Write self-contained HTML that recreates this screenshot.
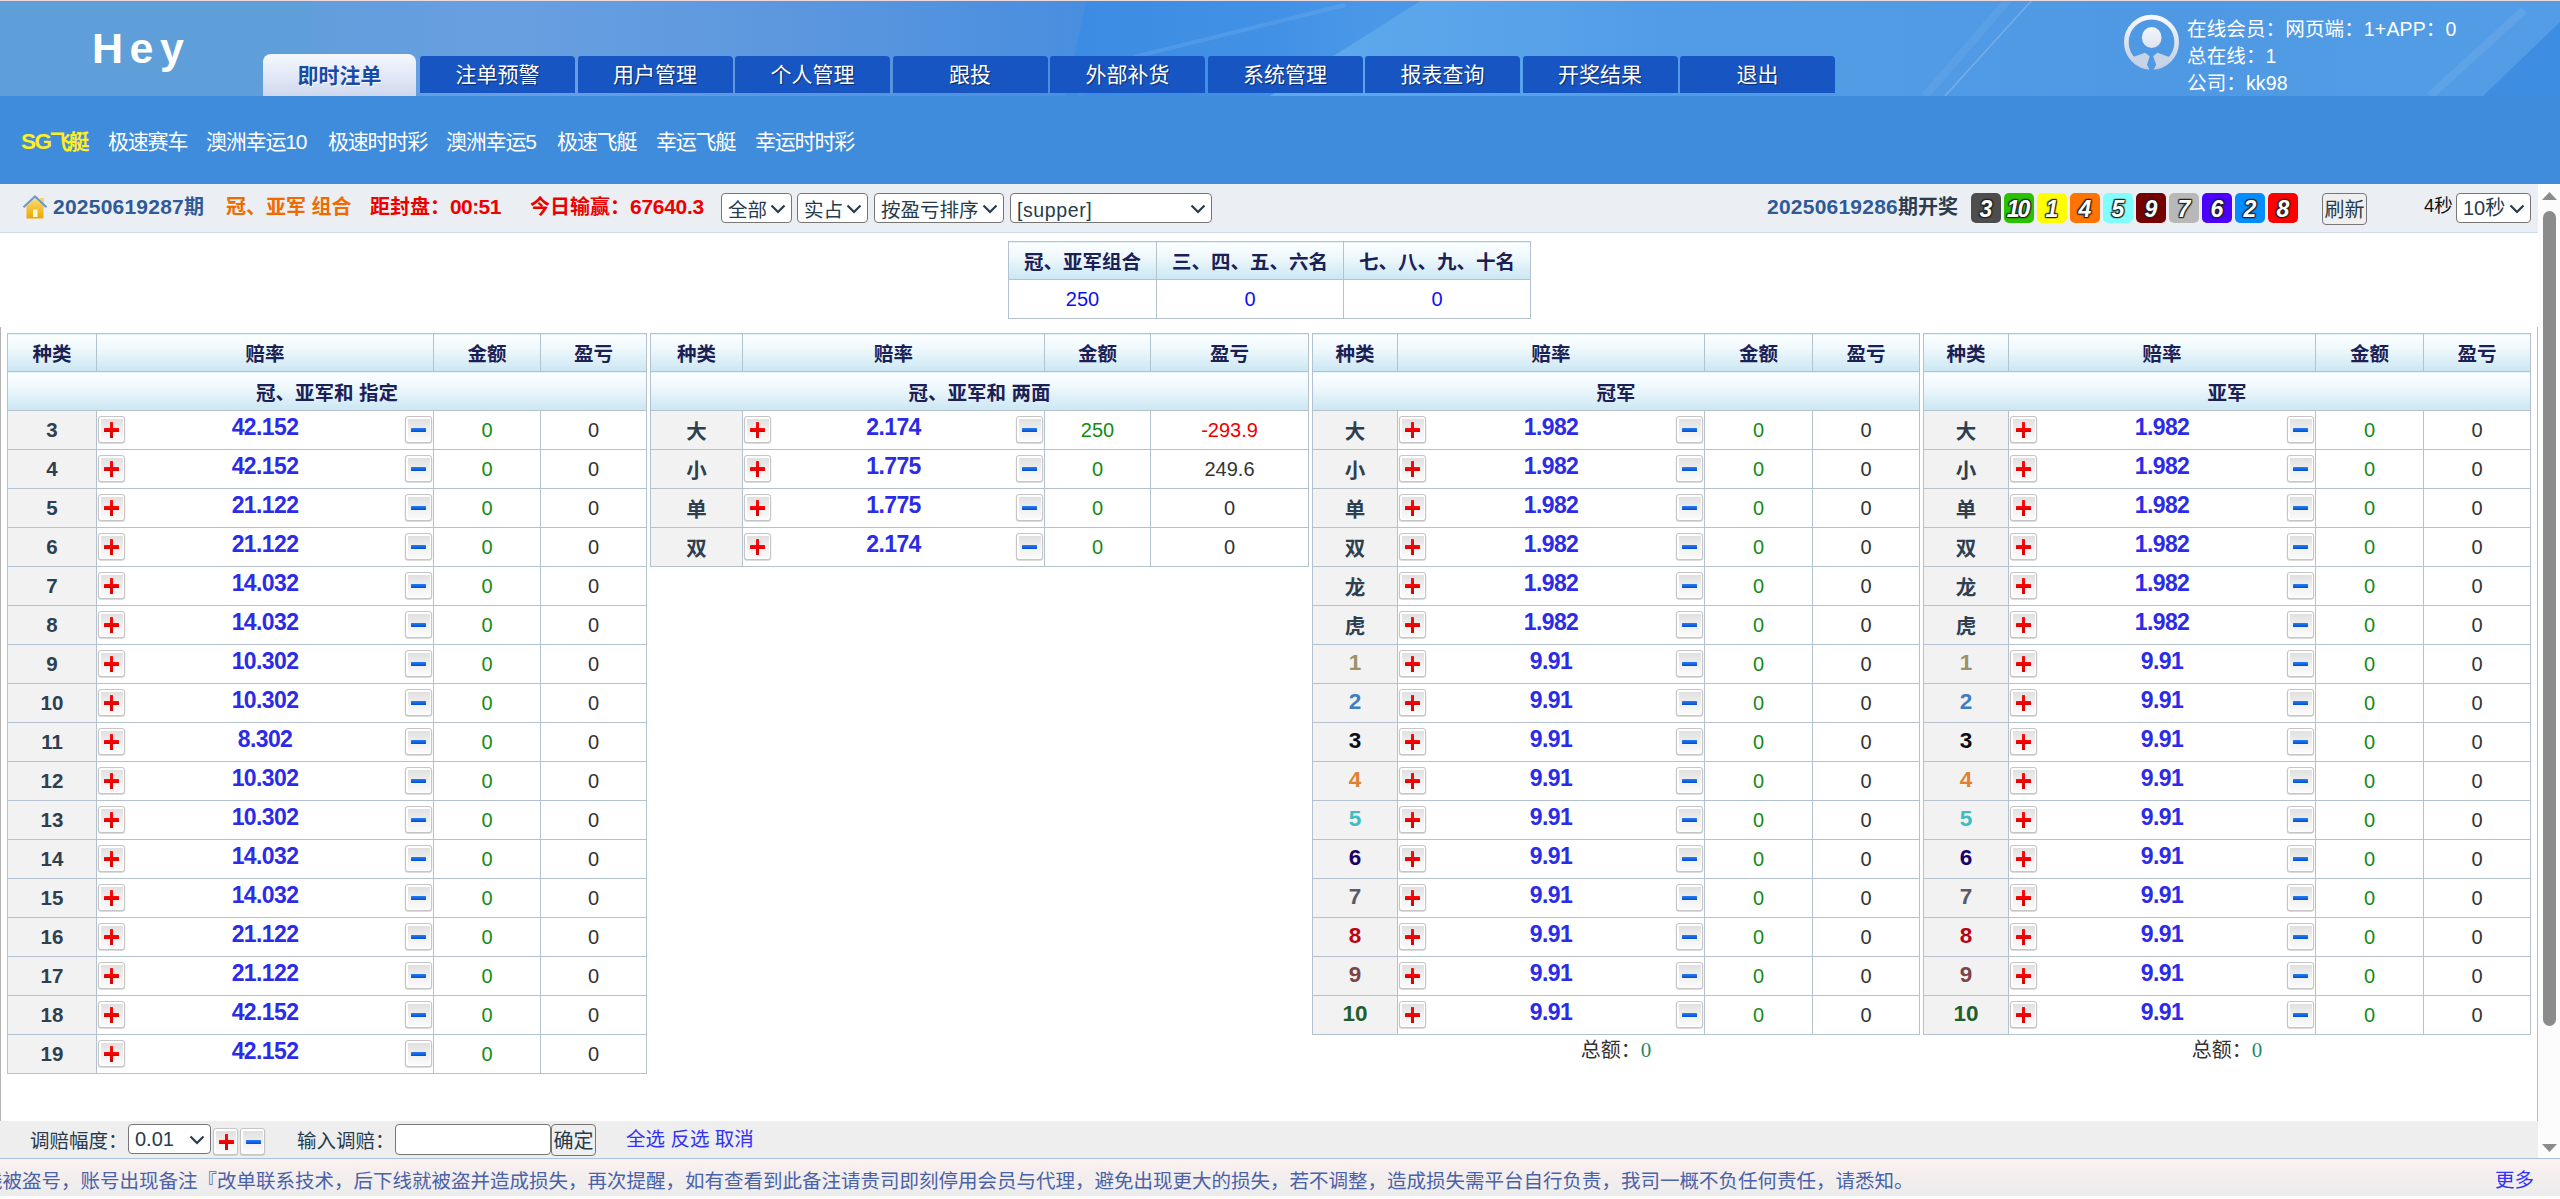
<!DOCTYPE html><html lang="zh-CN"><head><meta charset="utf-8"><title>Hey</title><style>
*{box-sizing:border-box}
html,body{margin:0;padding:0}
body{width:2560px;height:1199px;overflow:hidden;position:relative;background:#fff;
 font-family:"Liberation Sans","Noto Sans CJK SC",sans-serif;font-size:19.5px;color:#333}
.abs{position:absolute}
#hdr{position:absolute;left:0;top:0;width:2560px;height:96px;overflow:hidden;background:#5f9fd9}
#hdr .topline{position:absolute;left:0;top:0;width:2560px;height:1px;background:#ecd9dc;z-index:5}
#logo{position:absolute;left:92px;top:22px;font-size:43px;font-weight:bold;color:#fff;letter-spacing:6.5px;line-height:52px;white-space:nowrap}
.tab{position:absolute;top:56px;height:37px;width:155px;background:#1756c2;color:#fff;font-size:21px;line-height:38px;text-align:center;
 border-radius:3px 4px 0 0;text-shadow:1px 1px 1px rgba(0,0,40,.55);white-space:nowrap}
.tab.on{top:54px;height:42px;width:153px;line-height:44px;background:linear-gradient(180deg,#f4f7fd 0,#e3e9f7 50%,#cfd8ee 100%);color:#1a4aa8;font-weight:bold;
 border-radius:8px 8px 0 0;text-shadow:1px 1px 0 #fff}
#user{position:absolute;left:2187px;top:16px;color:#fff;font-size:19.5px;letter-spacing:.15px;line-height:27px;white-space:nowrap}
#nav{position:absolute;left:0;top:96px;width:2560px;height:88px;background:#3f8bdc}
#nav span{position:absolute;top:28px;line-height:36px;font-size:21px;color:#fff;white-space:nowrap;letter-spacing:-1.2px}
#nav span.on{color:#ffee22;font-weight:bold;letter-spacing:-2.3px}
#nav span.on b{font-size:22.5px;letter-spacing:-1.4px;margin-right:-1px}
#tool{position:absolute;left:0;top:184px;width:2538px;height:49px;background:#ebeff3;border-bottom:1px solid #cfdcf0}
#tool .t .d{font-size:21px;line-height:20px}
#tool .t{position:absolute;top:8px;line-height:30px;font-size:20px;font-weight:bold;white-space:nowrap}
.sel{position:absolute;height:30px;border:1px solid #767676;border-radius:4px;background:#fff;color:#263c4c;font-size:19.5px;line-height:28px;padding:2px 0 0 6px;white-space:nowrap;overflow:hidden}
.sel svg{position:absolute;right:5px;top:10px}
.ball{position:absolute;top:9px;width:30px;height:30px;border-radius:5px;font-family:"Liberation Sans",sans-serif;font-size:23px;font-weight:bold;font-style:italic;color:#fff;text-align:center;line-height:32px;text-shadow:1px 1px 1px #222,-1px -1px 1px #222,1px -1px 1px #222,-1px 1px 1px #222,0 0 2px #000}
.ball svg{position:absolute;left:0;top:0}
.btn{position:absolute;border:1px solid #767676;border-radius:4px;background:#efefef;color:#263c4c;font-size:20px;text-align:center;white-space:nowrap}
table.g{position:absolute;border-collapse:collapse;table-layout:fixed;font-size:20px}
table.g td,table.g th{border:1px solid #b4c1cf;padding:0;text-align:center;height:39px;overflow:hidden;white-space:nowrap;position:relative}
table.g th{background:linear-gradient(180deg,#fcfeff 0,#eef8fc 40%,#cbe6f3 100%);color:#1b2055;font-weight:bold;height:39px;font-size:19.5px}
table.g tr.h th{height:38px}
table.g td.k{background:#f2f2f2;font-weight:bold;color:#2e4050;font-size:20.5px}
table.g td.o{color:#2b2be8;font-weight:bold;font-size:23px;letter-spacing:-.6px}
table.g td.o b{position:relative;top:-3px}
table.g td.m{color:#148c14}
table.g td.p{color:#333}
table.g td.n{font-family:"Liberation Sans",sans-serif;font-size:22.5px;padding-bottom:3px}
.pb,.mb{position:absolute;top:5px;width:27px;height:27px;border:1px solid #c6c4c4;border-radius:3px;background:#fff;box-shadow:0 .6px 0 .2px rgba(170,168,168,.55)}
.pb{left:1px}.mb{right:1px}
.pb i,.mb i{position:absolute;left:1.5px;top:1.5px;right:1.5px;bottom:1.5px;background:linear-gradient(180deg,#e0e0e0 0,#efefef 50%,#fbfbfb 100%)}
.pb:before,.pb:after,.mb:before{content:"";position:absolute;z-index:2;border-radius:.5px}
.pb:before{left:5px;top:11.4px;width:15.25px;height:3.2px;background:linear-gradient(180deg,#ff0a0a,#d80000)}
.pb:after{left:11px;top:5.25px;width:3.2px;height:15.5px;background:linear-gradient(180deg,#ff0a0a,#dc0000)}
.mb:before{left:4.75px;top:11.4px;width:15px;height:3.2px;background:linear-gradient(180deg,#2a7cf4,#0050d2)}
</style></head><body>
<div id="hdr"><div class="topline"></div>
<svg class="abs" style="left:0;top:0" width="2560" height="96" viewBox="0 0 2560 96"><defs><linearGradient id="hb" x1="0" y1="0" x2="2560" y2="0" gradientUnits="userSpaceOnUse"><stop offset="0" stop-color="#5f9fd9"/><stop offset=".121" stop-color="#5f9fd9"/><stop offset=".126" stop-color="#639ddc"/><stop offset=".2" stop-color="#689fe1"/><stop offset=".31" stop-color="#5c97de"/><stop offset=".41" stop-color="#4b8fdf"/><stop offset=".4245" stop-color="#488ee0"/><stop offset=".4246" stop-color="#3c8ce3"/><stop offset=".5" stop-color="#4191e6"/><stop offset=".53" stop-color="#4a97e8"/><stop offset=".7" stop-color="#529ce6"/><stop offset=".85" stop-color="#4f99e4"/><stop offset="1" stop-color="#549de6"/></linearGradient><linearGradient id="hl" x1="1300" y1="0" x2="1800" y2="0" gradientUnits="userSpaceOnUse"><stop offset="0" stop-color="#60aaee" stop-opacity=".95"/><stop offset=".5" stop-color="#5ca5ea" stop-opacity=".7"/><stop offset="1" stop-color="#4f9ae6" stop-opacity="0"/></linearGradient></defs><rect width="2560" height="96" fill="url(#hb)"/><polygon points="1087,0 1100,0 1078,96 1065,96" fill="#3c8ce3"/><polygon points="1422,0 1900,0 1900,96 1270,96" fill="url(#hl)"/><path d="M1134 57 L1345 5" stroke="#fff" stroke-opacity=".09" stroke-width="4" fill="none"/><path d="M1945 96 L2032 0" stroke="#fff" stroke-opacity=".2" stroke-width="1.5" fill="none"/><path d="M1925 96 L2008 0" stroke="#fff" stroke-opacity=".05" stroke-width="8" fill="none"/><polygon points="2483,96 2560,22 2560,96" fill="#3a8ce0" opacity=".85"/><path d="M2430 96 L2524 10" stroke="#fff" stroke-opacity=".07" stroke-width="8" fill="none"/></svg>
<div id="logo">Hey</div>
<div class="tab on" style="left:263px">即时注单</div>
<div class="tab" style="left:420.0px">注单预警</div>
<div class="tab" style="left:577.5px">用户管理</div>
<div class="tab" style="left:735.0px">个人管理</div>
<div class="tab" style="left:892.5px">跟投</div>
<div class="tab" style="left:1050.0px">外部补货</div>
<div class="tab" style="left:1207.5px">系统管理</div>
<div class="tab" style="left:1365.0px">报表查询</div>
<div class="tab" style="left:1522.5px">开奖结果</div>
<div class="tab" style="left:1680.0px">退出</div>
<svg class="abs" style="left:2122px;top:13px" width="60" height="60" viewBox="0 0 60 60"><defs><linearGradient id="av" x1="0" y1="0" x2="0" y2="1"><stop offset="0" stop-color="#f6f8fc"/><stop offset="1" stop-color="#c3cee3"/></linearGradient><linearGradient id="av2" x1="0" y1="0" x2="0" y2="1"><stop offset="0" stop-color="#f4f6fb"/><stop offset="1" stop-color="#dde3f1"/></linearGradient><clipPath id="avc"><circle cx="29.5" cy="29.2" r="25.2"/></clipPath><mask id="avm"><rect width="60" height="60" fill="#fff"/><path d="M25.4 50 L24.9 52 L27.1 55.75 L28.3 60 L30.9 60 L32.1 55.75 L34.25 52 L33.7 50 Z" fill="#000"/></mask></defs><circle cx="29.5" cy="29.2" r="25.15" fill="none" stroke="url(#av)" stroke-width="4.7" mask="url(#avm)"/><ellipse cx="29.7" cy="24.5" rx="9.85" ry="10.5" fill="url(#av2)"/><g clip-path="url(#avc)" fill="#c9d3e6"><path d="M4 48 L11.1 43.9 L23 39.8 L27.7 43.25 L24.9 52 L27.1 55.75 L27.1 60 L4 60 Z"/><path d="M55 48 L47.4 43.9 L35.5 39.8 L31.1 43.25 L34.25 52 L32.1 55.75 L32.1 60 L55 60 Z"/></g></svg>
<div id="user">在线会员：网页端：1+APP：0<br>总在线：1<br>公司：kk98</div>
</div>
<div id="nav">
<span style="left:21px" class=on><b>SG</b>飞艇</span>
<span style="left:108px">极速赛车</span>
<span style="left:206px">澳洲幸运10</span>
<span style="left:328px">极速时时彩</span>
<span style="left:446px">澳洲幸运5</span>
<span style="left:557px">极速飞艇</span>
<span style="left:656px">幸运飞艇</span>
<span style="left:755px">幸运时时彩</span>
</div>
<div id="tool">
<svg class="abs" style="left:22px;top:10px" width="26" height="26" viewBox="0 0 26 26"><defs><linearGradient id="hs" x1="0" y1="0" x2="0" y2="1"><stop offset="0" stop-color="#ffd970"/><stop offset="1" stop-color="#e9a800"/></linearGradient></defs><rect x="18" y="4" width="4" height="8" fill="#ffd45a"/><path d="M4.5 12 L13 4.5 L21.5 12 L21.5 24.5 L4.5 24.5 Z" fill="url(#hs)"/><rect x="11" y="15.5" width="4.5" height="7.5" fill="#fff6d8"/><path d="M1.5 13.2 L13 2.5 L24.5 13.2" fill="none" stroke="#6a9ac8" stroke-width="2.2" stroke-linejoin="miter"/></svg>
<span class="t" style="left:53px;color:#2f5a96"><span class="d" style="letter-spacing:.23px">20250619287</span>期</span>
<span class="t" style="left:226px;color:#f06a00">冠、亚军 组合</span>
<span class="t" style="left:370px;color:#ee0000">距封盘：<span class="d" style="letter-spacing:-.6px">00:51</span></span>
<span class="t" style="left:530px;color:#ee0000">今日输赢：<span class="d" style="letter-spacing:-.3px">67640.3</span></span>
<div class="sel" style="left:721px;top:9px;width:71px">全部<svg width="16" height="10" viewBox="0 0 16 10"><path d="M1.5 1.5 L8 8 L14.5 1.5" fill="none" stroke="#263c4c" stroke-width="2.2"/></svg></div>
<div class="sel" style="left:797px;top:9px;width:71px">实占<svg width="16" height="10" viewBox="0 0 16 10"><path d="M1.5 1.5 L8 8 L14.5 1.5" fill="none" stroke="#263c4c" stroke-width="2.2"/></svg></div>
<div class="sel" style="left:874px;top:9px;width:130px">按盈亏排序<svg width="16" height="10" viewBox="0 0 16 10"><path d="M1.5 1.5 L8 8 L14.5 1.5" fill="none" stroke="#263c4c" stroke-width="2.2"/></svg></div>
<div class="sel" style="left:1010px;top:9px;width:202px;letter-spacing:.6px">[supper]<svg width="16" height="10" viewBox="0 0 16 10"><path d="M1.5 1.5 L8 8 L14.5 1.5" fill="none" stroke="#263c4c" stroke-width="2.2"/></svg></div>
<span class="t" style="left:1767px;color:#2f5a96"><span class="d" style="letter-spacing:.23px">20250619286</span><span style="color:#2e3d4e">期开奖</span></span>
<div class="ball" style="left:1971px;background:#4d4d4d">3</div>
<div class="ball" style="left:2004px;background:#28c200;letter-spacing:-2px;text-indent:-3px">10</div>
<div class="ball" style="left:2037px;background:#ffff00">1</div>
<div class="ball" style="left:2070px;background:#ff7300">4</div>
<div class="ball" style="left:2103px;background:#81ffff">5</div>
<div class="ball" style="left:2136px;background:#760000">9</div>
<div class="ball" style="left:2169px;background:#b8b8b8">7</div>
<div class="ball" style="left:2202px;background:#4b00fe">6</div>
<div class="ball" style="left:2235px;background:#018dff">2</div>
<div class="ball" style="left:2268px;background:#fe0000">8</div>
<div class="btn" style="left:2322px;top:9px;width:45px;height:32px;line-height:33px;padding:0">刷新</div>
<span class="abs" style="left:2424px;top:7px;line-height:30px;font-size:18.5px;color:#111;white-space:nowrap">4秒</span>
<div class="sel" style="left:2456px;top:9px;width:75px;padding-top:0;font-size:20px">10秒<svg width="16" height="10" viewBox="0 0 16 10"><path d="M1.5 1.5 L8 8 L14.5 1.5" fill="none" stroke="#263c4c" stroke-width="2.2"/></svg></div>
</div>
<table class="g" style="left:1008px;top:241px;width:523px"><colgroup><col style="width:148px"><col style="width:187px"><col style="width:187px"></colgroup><tr class="h"><th>冠、亚军组合</th><th>三、四、五、六名</th><th>七、八、九、十名</th></tr><tr><td style="color:#1010ee">250</td><td style="color:#1010ee">0</td><td style="color:#1010ee">0</td></tr></table>
<table class="g" style="left:7px;top:333px;width:640px"><colgroup><col style="width:89px"><col style="width:337px"><col style="width:107px"><col style="width:106px"></colgroup><tr class="h"><th>种类</th><th>赔率</th><th>金额</th><th>盈亏</th></tr><tr><th colspan="4">冠、亚军和 指定</th></tr><tr><td class="k">3</td><td class="o"><span class="pb"><i></i></span><b>42.152</b><span class="mb"><i></i></span></td><td class="m">0</td><td class="p">0</td></tr><tr><td class="k">4</td><td class="o"><span class="pb"><i></i></span><b>42.152</b><span class="mb"><i></i></span></td><td class="m">0</td><td class="p">0</td></tr><tr><td class="k">5</td><td class="o"><span class="pb"><i></i></span><b>21.122</b><span class="mb"><i></i></span></td><td class="m">0</td><td class="p">0</td></tr><tr><td class="k">6</td><td class="o"><span class="pb"><i></i></span><b>21.122</b><span class="mb"><i></i></span></td><td class="m">0</td><td class="p">0</td></tr><tr><td class="k">7</td><td class="o"><span class="pb"><i></i></span><b>14.032</b><span class="mb"><i></i></span></td><td class="m">0</td><td class="p">0</td></tr><tr><td class="k">8</td><td class="o"><span class="pb"><i></i></span><b>14.032</b><span class="mb"><i></i></span></td><td class="m">0</td><td class="p">0</td></tr><tr><td class="k">9</td><td class="o"><span class="pb"><i></i></span><b>10.302</b><span class="mb"><i></i></span></td><td class="m">0</td><td class="p">0</td></tr><tr><td class="k">10</td><td class="o"><span class="pb"><i></i></span><b>10.302</b><span class="mb"><i></i></span></td><td class="m">0</td><td class="p">0</td></tr><tr><td class="k">11</td><td class="o"><span class="pb"><i></i></span><b>8.302</b><span class="mb"><i></i></span></td><td class="m">0</td><td class="p">0</td></tr><tr><td class="k">12</td><td class="o"><span class="pb"><i></i></span><b>10.302</b><span class="mb"><i></i></span></td><td class="m">0</td><td class="p">0</td></tr><tr><td class="k">13</td><td class="o"><span class="pb"><i></i></span><b>10.302</b><span class="mb"><i></i></span></td><td class="m">0</td><td class="p">0</td></tr><tr><td class="k">14</td><td class="o"><span class="pb"><i></i></span><b>14.032</b><span class="mb"><i></i></span></td><td class="m">0</td><td class="p">0</td></tr><tr><td class="k">15</td><td class="o"><span class="pb"><i></i></span><b>14.032</b><span class="mb"><i></i></span></td><td class="m">0</td><td class="p">0</td></tr><tr><td class="k">16</td><td class="o"><span class="pb"><i></i></span><b>21.122</b><span class="mb"><i></i></span></td><td class="m">0</td><td class="p">0</td></tr><tr><td class="k">17</td><td class="o"><span class="pb"><i></i></span><b>21.122</b><span class="mb"><i></i></span></td><td class="m">0</td><td class="p">0</td></tr><tr><td class="k">18</td><td class="o"><span class="pb"><i></i></span><b>42.152</b><span class="mb"><i></i></span></td><td class="m">0</td><td class="p">0</td></tr><tr><td class="k">19</td><td class="o"><span class="pb"><i></i></span><b>42.152</b><span class="mb"><i></i></span></td><td class="m">0</td><td class="p">0</td></tr></table>
<table class="g" style="left:650px;top:333px;width:659px"><colgroup><col style="width:92px"><col style="width:302px"><col style="width:106px"><col style="width:158px"></colgroup><tr class="h"><th>种类</th><th>赔率</th><th>金额</th><th>盈亏</th></tr><tr><th colspan="4">冠、亚军和 两面</th></tr><tr><td class="k">大</td><td class="o"><span class="pb"><i></i></span><b>2.174</b><span class="mb"><i></i></span></td><td class="m">250</td><td class="p" style="color:#ee0000">-293.9</td></tr><tr><td class="k">小</td><td class="o"><span class="pb"><i></i></span><b>1.775</b><span class="mb"><i></i></span></td><td class="m">0</td><td class="p">249.6</td></tr><tr><td class="k">单</td><td class="o"><span class="pb"><i></i></span><b>1.775</b><span class="mb"><i></i></span></td><td class="m">0</td><td class="p">0</td></tr><tr><td class="k">双</td><td class="o"><span class="pb"><i></i></span><b>2.174</b><span class="mb"><i></i></span></td><td class="m">0</td><td class="p">0</td></tr></table>
<table class="g" style="left:1312px;top:333px;width:608px"><colgroup><col style="width:85px"><col style="width:307px"><col style="width:108px"><col style="width:107px"></colgroup><tr class="h"><th>种类</th><th>赔率</th><th>金额</th><th>盈亏</th></tr><tr><th colspan="4">冠军</th></tr><tr><td class="k">大</td><td class="o"><span class="pb"><i></i></span><b>1.982</b><span class="mb"><i></i></span></td><td class="m">0</td><td class="p">0</td></tr><tr><td class="k">小</td><td class="o"><span class="pb"><i></i></span><b>1.982</b><span class="mb"><i></i></span></td><td class="m">0</td><td class="p">0</td></tr><tr><td class="k">单</td><td class="o"><span class="pb"><i></i></span><b>1.982</b><span class="mb"><i></i></span></td><td class="m">0</td><td class="p">0</td></tr><tr><td class="k">双</td><td class="o"><span class="pb"><i></i></span><b>1.982</b><span class="mb"><i></i></span></td><td class="m">0</td><td class="p">0</td></tr><tr><td class="k">龙</td><td class="o"><span class="pb"><i></i></span><b>1.982</b><span class="mb"><i></i></span></td><td class="m">0</td><td class="p">0</td></tr><tr><td class="k">虎</td><td class="o"><span class="pb"><i></i></span><b>1.982</b><span class="mb"><i></i></span></td><td class="m">0</td><td class="p">0</td></tr><tr><td class="k n" style="color:#9a9268">1</td><td class="o"><span class="pb"><i></i></span><b>9.91</b><span class="mb"><i></i></span></td><td class="m">0</td><td class="p">0</td></tr><tr><td class="k n" style="color:#3d7fc0">2</td><td class="o"><span class="pb"><i></i></span><b>9.91</b><span class="mb"><i></i></span></td><td class="m">0</td><td class="p">0</td></tr><tr><td class="k n" style="color:#0a0a14">3</td><td class="o"><span class="pb"><i></i></span><b>9.91</b><span class="mb"><i></i></span></td><td class="m">0</td><td class="p">0</td></tr><tr><td class="k n" style="color:#e08030">4</td><td class="o"><span class="pb"><i></i></span><b>9.91</b><span class="mb"><i></i></span></td><td class="m">0</td><td class="p">0</td></tr><tr><td class="k n" style="color:#40bcc0">5</td><td class="o"><span class="pb"><i></i></span><b>9.91</b><span class="mb"><i></i></span></td><td class="m">0</td><td class="p">0</td></tr><tr><td class="k n" style="color:#1a0066">6</td><td class="o"><span class="pb"><i></i></span><b>9.91</b><span class="mb"><i></i></span></td><td class="m">0</td><td class="p">0</td></tr><tr><td class="k n" style="color:#5a5a66">7</td><td class="o"><span class="pb"><i></i></span><b>9.91</b><span class="mb"><i></i></span></td><td class="m">0</td><td class="p">0</td></tr><tr><td class="k n" style="color:#bb0010">8</td><td class="o"><span class="pb"><i></i></span><b>9.91</b><span class="mb"><i></i></span></td><td class="m">0</td><td class="p">0</td></tr><tr><td class="k n" style="color:#7a4448">9</td><td class="o"><span class="pb"><i></i></span><b>9.91</b><span class="mb"><i></i></span></td><td class="m">0</td><td class="p">0</td></tr><tr><td class="k n" style="color:#1f5f2f">10</td><td class="o"><span class="pb"><i></i></span><b>9.91</b><span class="mb"><i></i></span></td><td class="m">0</td><td class="p">0</td></tr></table>
<table class="g" style="left:1923px;top:333px;width:608px"><colgroup><col style="width:85px"><col style="width:307px"><col style="width:108px"><col style="width:107px"></colgroup><tr class="h"><th>种类</th><th>赔率</th><th>金额</th><th>盈亏</th></tr><tr><th colspan="4">亚军</th></tr><tr><td class="k">大</td><td class="o"><span class="pb"><i></i></span><b>1.982</b><span class="mb"><i></i></span></td><td class="m">0</td><td class="p">0</td></tr><tr><td class="k">小</td><td class="o"><span class="pb"><i></i></span><b>1.982</b><span class="mb"><i></i></span></td><td class="m">0</td><td class="p">0</td></tr><tr><td class="k">单</td><td class="o"><span class="pb"><i></i></span><b>1.982</b><span class="mb"><i></i></span></td><td class="m">0</td><td class="p">0</td></tr><tr><td class="k">双</td><td class="o"><span class="pb"><i></i></span><b>1.982</b><span class="mb"><i></i></span></td><td class="m">0</td><td class="p">0</td></tr><tr><td class="k">龙</td><td class="o"><span class="pb"><i></i></span><b>1.982</b><span class="mb"><i></i></span></td><td class="m">0</td><td class="p">0</td></tr><tr><td class="k">虎</td><td class="o"><span class="pb"><i></i></span><b>1.982</b><span class="mb"><i></i></span></td><td class="m">0</td><td class="p">0</td></tr><tr><td class="k n" style="color:#9a9268">1</td><td class="o"><span class="pb"><i></i></span><b>9.91</b><span class="mb"><i></i></span></td><td class="m">0</td><td class="p">0</td></tr><tr><td class="k n" style="color:#3d7fc0">2</td><td class="o"><span class="pb"><i></i></span><b>9.91</b><span class="mb"><i></i></span></td><td class="m">0</td><td class="p">0</td></tr><tr><td class="k n" style="color:#0a0a14">3</td><td class="o"><span class="pb"><i></i></span><b>9.91</b><span class="mb"><i></i></span></td><td class="m">0</td><td class="p">0</td></tr><tr><td class="k n" style="color:#e08030">4</td><td class="o"><span class="pb"><i></i></span><b>9.91</b><span class="mb"><i></i></span></td><td class="m">0</td><td class="p">0</td></tr><tr><td class="k n" style="color:#40bcc0">5</td><td class="o"><span class="pb"><i></i></span><b>9.91</b><span class="mb"><i></i></span></td><td class="m">0</td><td class="p">0</td></tr><tr><td class="k n" style="color:#1a0066">6</td><td class="o"><span class="pb"><i></i></span><b>9.91</b><span class="mb"><i></i></span></td><td class="m">0</td><td class="p">0</td></tr><tr><td class="k n" style="color:#5a5a66">7</td><td class="o"><span class="pb"><i></i></span><b>9.91</b><span class="mb"><i></i></span></td><td class="m">0</td><td class="p">0</td></tr><tr><td class="k n" style="color:#bb0010">8</td><td class="o"><span class="pb"><i></i></span><b>9.91</b><span class="mb"><i></i></span></td><td class="m">0</td><td class="p">0</td></tr><tr><td class="k n" style="color:#7a4448">9</td><td class="o"><span class="pb"><i></i></span><b>9.91</b><span class="mb"><i></i></span></td><td class="m">0</td><td class="p">0</td></tr><tr><td class="k n" style="color:#1f5f2f">10</td><td class="o"><span class="pb"><i></i></span><b>9.91</b><span class="mb"><i></i></span></td><td class="m">0</td><td class="p">0</td></tr></table>
<div class="abs" style="left:1312px;top:1036px;width:608px;text-align:center;font-size:20px;line-height:28px;color:#333">总额：<span style="font-family:'Liberation Serif',serif;color:#2a8a66;font-size:21px">0</span></div>
<div class="abs" style="left:1923px;top:1036px;width:608px;text-align:center;font-size:20px;line-height:28px;color:#333">总额：<span style="font-family:'Liberation Serif',serif;color:#2a8a66;font-size:21px">0</span></div>
<div class="abs" style="left:0;top:327px;width:1px;height:794px;background:#b4b4b4"></div>
<div class="abs" style="left:2537px;top:327px;width:1px;height:794px;background:#bdbdbd"></div>
<div class="abs" style="left:0;top:1121px;width:2538px;height:37px;background:#eeeeee"></div><div class="abs" style="left:0;top:1158px;width:2560px;height:1px;background:#a6c2e6;z-index:3"></div>
<span class="abs" style="left:30px;top:1126px;line-height:30px;color:#263c4c;white-space:nowrap">调赔幅度：</span>
<div class="sel" style="left:128px;top:1124px;width:83px;padding-top:0;font-size:20px">0.01<svg width="16" height="10" viewBox="0 0 16 10"><path d="M1.5 1.5 L8 8 L14.5 1.5" fill="none" stroke="#263c4c" stroke-width="2.2"/></svg></div>
<span class="pb" style="left:213px;top:1128px;width:25px"><i></i></span><span class="mb" style="left:240px;top:1128px;width:25px;right:auto"><i></i></span>
<span class="abs" style="left:297px;top:1126px;line-height:30px;color:#263c4c;white-space:nowrap">输入调赔：</span>
<div class="abs" style="left:395px;top:1124px;width:156px;height:31px;border:1px solid #767676;border-radius:4px;background:#fff"></div>
<div class="btn" style="left:551px;top:1124px;width:45px;height:32px;line-height:33px">确定</div>
<span class="abs" style="left:626px;top:1124px;line-height:30px;color:#3232f6;white-space:nowrap">全选 反选 取消</span>
<div class="abs" style="left:2538px;top:184px;width:22px;height:975px;background:#fcfcfc"></div>
<svg class="abs" style="left:2538px;top:184px" width="22" height="975" viewBox="0 0 22 975"><path d="M4 16 L19 16 L11.5 8 Z" fill="#8b8b8b"/><path d="M4 960 L19 960 L11.5 968 Z" fill="#8b8b8b"/><rect x="5" y="27" width="13" height="815" rx="6.5" fill="#8b8b8b"/></svg>
<div class="abs" style="left:0;top:1159px;width:2560px;height:37px;background:linear-gradient(180deg,#fdf1f0 0,#f3eeee 50%,#ececec 100%);overflow:hidden"><span class="abs" style="left:-17px;top:6px;line-height:32px;font-size:19.5px;color:#4a62a8;white-space:nowrap">线被盗号，账号出现备注『改单联系技术，后下线就被盗并造成损失，再次提醒，如有查看到此备注请贵司即刻停用会员与代理，避免出现更大的损失，若不调整，造成损失需平台自行负责，我司一概不负任何责任，请悉知。</span><span class="abs" style="left:2495px;top:5px;line-height:32px;font-size:19.5px;color:#3030ff;white-space:nowrap">更多</span></div>
</body></html>
